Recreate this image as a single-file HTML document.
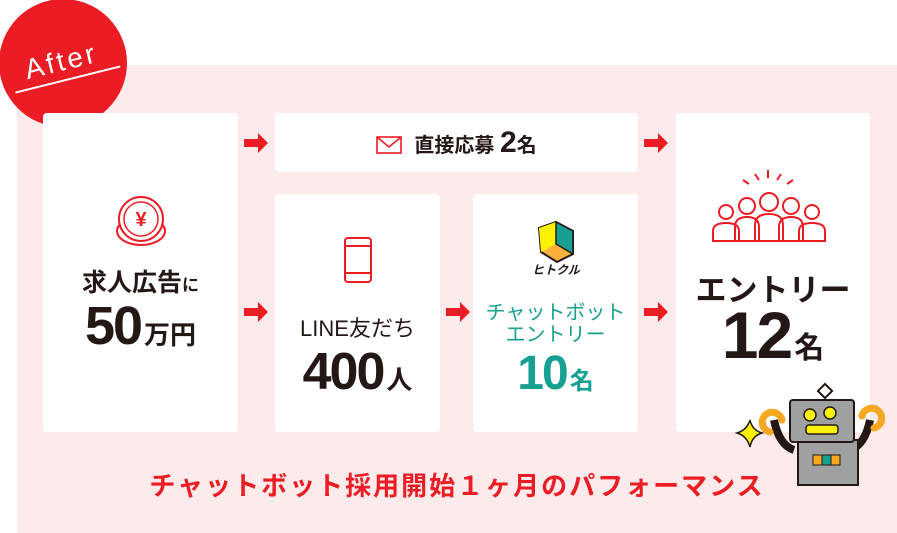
<!DOCTYPE html><html><head><meta charset="utf-8"><style>
*{margin:0;padding:0;box-sizing:border-box}
body{width:897px;height:533px;background:#fff;position:relative;overflow:hidden;font-family:"Liberation Sans","Noto Sans CJK JP",sans-serif;font-weight:bold;color:#231815}
.bg{position:absolute;left:17px;top:65px;width:880px;height:468px;background:#fdeaea}
.box{position:absolute;background:#fff;border-radius:4px;text-align:center}
.arr{position:absolute;width:24px;height:20px}
.c{position:absolute;left:0;width:100%;text-align:center;white-space:nowrap}
.n{letter-spacing:-2px;margin-right:3px}
</style></head><body>
<div class="bg"></div>
<svg style="position:absolute;left:0;top:0" width="130" height="130"><circle cx="63" cy="63" r="64" fill="#ec1c24"/>
<g transform="rotate(-14 64 64)"><text x="62" y="70" text-anchor="middle" fill="#fff" font-family="Liberation Sans" font-size="28" letter-spacing="3" font-weight="normal">After</text><line x1="10" y1="80" x2="118" y2="80" stroke="#fff" stroke-width="2"/></g></svg>

<div class="box" style="left:43px;top:113px;width:195px;height:319px">
<svg class="c" style="top:82px;left:70px;width:56px" width="56" height="56"><ellipse cx="28" cy="36" rx="24" ry="14" fill="#fff" stroke="#ec1c24" stroke-width="2"/><circle cx="28" cy="24" r="22" fill="#fff" stroke="#ec1c24" stroke-width="2"/><circle cx="28" cy="24" r="17" fill="#fff" stroke="#ec1c24" stroke-width="1.5"/><text x="28" y="31" text-anchor="middle" fill="#ec1c24" font-size="20">¥</text></svg>
<div class="c" style="top:150px;font-size:25px">求人広告<span style="font-size:17px">に</span></div>
<div class="c" style="top:182px;font-size:54px"><span class="n">50</span><span style="font-size:26px">万円</span></div>
</div>
<div class="box" style="left:275px;top:113px;width:363px;height:59px">
<div class="c" style="top:13px;font-size:20px"><svg width="26" height="20" style="vertical-align:-3px;margin-right:12px"><rect x="1" y="2" width="24" height="16" fill="none" stroke="#ec1c24" stroke-width="1.6"/><path d="M1 2 L13 12 L25 2" fill="none" stroke="#ec1c24" stroke-width="1.6"/></svg>直接応募 <span style="font-size:30px">2</span>名</div>
</div>
<div class="box" style="left:275px;top:194px;width:165px;height:238px">
<svg class="c" style="top:42px;left:68px;width:30px" width="30" height="48"><rect x="2" y="2" width="26" height="44" rx="3" fill="none" stroke="#ec1c24" stroke-width="2"/><line x1="2" y1="10" x2="28" y2="10" stroke="#ec1c24" stroke-width="2"/><line x1="2" y1="37" x2="28" y2="37" stroke="#ec1c24" stroke-width="2"/></svg>
<div class="c" style="top:117px;font-size:22px;font-weight:normal">LINE友だち</div>
<div class="c" style="top:148px;font-size:52px"><span class="n">400</span><span style="font-size:26px">人</span></div>
</div>
<div class="box" style="left:473px;top:194px;width:165px;height:238px">
<svg class="c" style="top:22px;left:56px;width:54px" width="54" height="60"><path d="M10 12 L27 6 L44 15 L44 38 L28 46 L12 36Z" fill="#fbb03b" stroke="#231815" stroke-width="2"/><path d="M10 12 L27 6 L27 28 L12 36Z" fill="#fff200"/><path d="M27 6 L44 15 L44 38 L27 28Z" fill="#17a091" stroke="#231815" stroke-width="1.5"/><text x="27" y="58" text-anchor="middle" font-size="12" fill="#231815" font-style="italic">ヒトクル</text></svg>
<div class="c" style="top:108px;font-size:20px;color:#17a091;line-height:22px;font-weight:normal">チャットボット<br>エントリー</div>
<div class="c" style="top:152px;font-size:48px;color:#17a091"><span class="n">10</span><span style="font-size:24px">名</span></div>
</div>
<div class="box" style="left:676px;top:113px;width:194px;height:319px">
<svg class="c" style="top:55px;left:35px;width:124px" width="124" height="80"><g fill="none" stroke="#ec1c24" stroke-width="2"><path d="M57 2v8M44 6l4 6M70 6l-4 6M32 12l6 4M82 12l-6 4"/><circle cx="15" cy="44" r="7"/><circle cx="36" cy="38" r="8"/><circle cx="58" cy="34" r="9"/><circle cx="80" cy="38" r="8"/><circle cx="101" cy="44" r="7"/><path d="M2 73v-10q0-8 13-8 13 0 13 8v10ZM24 73v-14q0-10 12-10 12 0 12 10v14ZM44 73v-16q0-11 14-11 14 0 14 11v16ZM68 73v-14q0-10 12-10 12 0 12 10v14ZM88 73v-10q0-8 13-8 13 0 13 8v10Z"/></g></svg>
<div class="c" style="top:152px;font-size:31px">エントリー</div>
<div class="c" style="top:184px;font-size:66px"><span class="n">12</span><span style="font-size:30px">名</span></div>
</div>
<svg class="arr" style="left:244px;top:133px"><path d="M0 6h14V0l10 10-10 10v-6H0z" fill="#ec1c24"/></svg>
<svg class="arr" style="left:244px;top:302px"><path d="M0 6h14V0l10 10-10 10v-6H0z" fill="#ec1c24"/></svg>
<svg class="arr" style="left:446px;top:302px"><path d="M0 6h14V0l10 10-10 10v-6H0z" fill="#ec1c24"/></svg>
<svg class="arr" style="left:644px;top:133px"><path d="M0 6h14V0l10 10-10 10v-6H0z" fill="#ec1c24"/></svg>
<svg class="arr" style="left:644px;top:302px"><path d="M0 6h14V0l10 10-10 10v-6H0z" fill="#ec1c24"/></svg>
<div style="position:absolute;left:17px;width:880px;top:466px;text-align:center;font-size:26px;color:#ec1c24;letter-spacing:2px">チャットボット採用開始１ヶ月のパフォーマンス</div>
<svg style="position:absolute;left:730px;top:380px" width="167" height="110">
<path d="M20 40 Q22 50 32 53 Q22 56 20 67 Q17 56 7 53 Q17 50 20 40Z" fill="#fff200" stroke="#231815" stroke-width="1.5"/>
<path d="M44 40 q5 25 20 30" fill="none" stroke="#231815" stroke-width="8"/>
<path d="M140 40 q-5 25 -20 30" fill="none" stroke="#231815" stroke-width="8"/>
<path d="M40 52 a10 10 0 1 1 12 -12" fill="none" stroke="#f7a823" stroke-width="7" stroke-linecap="round"/>
<path d="M144 48 a10 10 0 1 0 -12 -12" fill="none" stroke="#f7a823" stroke-width="7" stroke-linecap="round"/>
<rect x="68" y="60" width="60" height="45" fill="#9fa0a0" stroke="#231815" stroke-width="2"/>
<rect x="83" y="75" width="9" height="10" fill="#f7a823" stroke="#231815"/><rect x="92" y="75" width="9" height="10" fill="#17a091" stroke="#231815"/><rect x="101" y="75" width="9" height="10" fill="#f7a823" stroke="#231815"/>
<rect x="60" y="20" width="64" height="42" rx="3" fill="#9fa0a0" stroke="#231815" stroke-width="2"/>
<rect x="90" y="6" width="10" height="10" transform="rotate(45 95 11)" fill="#fff" stroke="#231815" stroke-width="2"/>
<circle cx="80" cy="35" r="6" fill="#fff200" stroke="#231815" stroke-width="1.5"/><circle cx="100" cy="33" r="6" fill="#fff200" stroke="#231815" stroke-width="1.5"/>
<rect x="76" y="45" width="32" height="9" rx="3" fill="#fff200" stroke="#231815" stroke-width="1.5"/>
</svg>
</body></html>
